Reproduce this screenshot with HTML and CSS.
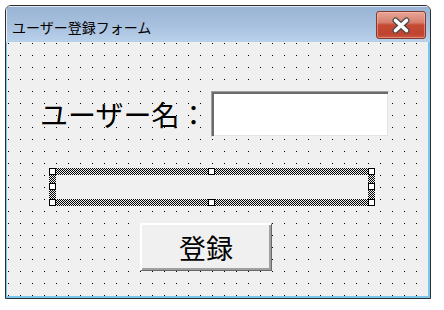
FILE: index.html
```html
<!DOCTYPE html>
<html lang="ja">
<head>
    <meta charset="UTF-8">
    <title>ユーザー登録フォーム</title>
    <link rel="stylesheet" href="styles.css">
</head>
<body>

    <div class="window">
        <div class="titlebar">
            <span class="title">ユーザー登録フォーム</span>
            <div class="close-btn">
                <svg width="18" height="17" viewBox="0 0 18 17">
                    <path d="M3.5 3.5 L14.5 13.5 M14.5 3.5 L3.5 13.5" stroke="#4a4a4a" stroke-width="6" stroke-linecap="round"/>
                    <path d="M3.5 3.5 L14.5 13.5 M14.5 3.5 L3.5 13.5" stroke="#ffffff" stroke-width="3.6" stroke-linecap="round"/>
                </svg>
            </div>
        </div>

        <div class="client">
            <div class="field-row">
                <span class="field-label">ユーザー名：</span>
                <div class="textbox"></div>
            </div>

            <div class="selection">
                <div class="label-control"></div>
                <span class="handle tl"></span>
                <span class="handle tm"></span>
                <span class="handle tr"></span>
                <span class="handle ml"></span>
                <span class="handle mr"></span>
                <span class="handle bl"></span>
                <span class="handle bm"></span>
                <span class="handle br"></span>
            </div>

            <div class="command-btn">登録</div>
        </div>
    </div>

</body>
</html>
```

FILE: styles.css
```css
body {
    margin: 0;
    background-color: #ffffff;
    font-family: "Noto Sans CJK JP", "Noto Sans", sans-serif;
    color: #000;
}

.window {
    box-sizing: border-box;
    margin: 5px 0 0 5px;
    width: 426px;
    height: 294px;
    border: 1px solid #2e2e2e;
    border-radius: 6px 6px 0 0;
    overflow: hidden;
    display: flex;
    flex-direction: column;
}

.titlebar {
    height: 36px;
    display: flex;
    justify-content: space-between;
    align-items: flex-start;
    background-image: linear-gradient(#98b3d3, #a9c2df 60%, #bad1ea);
    box-shadow: inset 1px 1px 0 rgba(255, 255, 255, 0.7);
}

.title {
    margin: 11px 0 0 6px;
    font-size: 14px;
    line-height: 20px;
    color: #000;
}

.close-btn {
    box-sizing: border-box;
    width: 50px;
    height: 28px;
    margin: 5px 4px 0 0;
    border: 1px solid #83392c;
    border-radius: 3px;
    background-image: linear-gradient(#e7a696, #d7806f 40%, #c54a35 50%, #c0432e 85%, #cc5a43);
    box-shadow: inset 0 0 0 1px rgba(255, 200, 190, 0.45);
    display: flex;
    align-items: center;
    justify-content: center;
}

.close-btn svg {
    margin-top: 1px;
}

.client {
    flex: 1;
    border-left: 1px solid #78c6ee;
    border-right: 2px solid #78c6ee;
    border-bottom: 2px solid #78c6ee;
    background-color: #f0f0f0;
    background-image:
        linear-gradient(90deg, #f0f0f0 11px, transparent 1px),
        linear-gradient(#f0f0f0 11px, #000 1px);
    background-size: 12px 12px;
    background-position: 2px 2px;
    display: flex;
    flex-direction: column;
    align-items: flex-start;
    padding-top: 49px;
}

.field-row {
    display: flex;
    align-items: center;
    padding-left: 33px;
}

.field-label {
    font-size: 28px;
    line-height: 1;
    white-space: nowrap;
}

.textbox {
    box-sizing: border-box;
    width: 178px;
    height: 46px;
    margin-left: 4px;
    background-color: #ffffff;
    border-top: 1px solid #a0a0a0;
    border-left: 1px solid #a0a0a0;
    border-right: 1px solid #f0f0f0;
    border-bottom: 1px solid #f0f0f0;
    box-shadow: inset 2px 2px 0 #6b6b6b, inset -1px -1px 0 #e3e3e3;
}

.selection {
    position: relative;
    box-sizing: border-box;
    width: 326px;
    height: 38px;
    margin: 31px 0 0 42px;
    padding: 7px;
    background: repeating-conic-gradient(#000 0 25%, #f0f0f0 0 50%) 0 0 / 2px 2px;
}

.label-control {
    width: 100%;
    height: 100%;
    background-color: #f0f0f0;
}

.handle {
    position: absolute;
    box-sizing: border-box;
    width: 7px;
    height: 7px;
    border: 1px solid #000;
    background-color: #fff;
}

.handle.tl { left: 0; top: 0; }
.handle.tm { left: 159px; top: 0; }
.handle.tr { right: 0; top: 0; }
.handle.ml { left: 0; top: 15px; }
.handle.mr { right: 0; top: 15px; }
.handle.bl { left: 0; bottom: 0; }
.handle.bm { left: 159px; bottom: 0; }
.handle.br { right: 0; bottom: 0; }

.command-btn {
    box-sizing: border-box;
    width: 132px;
    height: 48px;
    margin: 17px 0 0 133px;
    background-color: #f0f0f0;
    border-top: 1px solid #ffffff;
    border-left: 1px solid #ffffff;
    border-right: 1px solid #696969;
    border-bottom: 1px solid #696969;
    box-shadow: inset 1px 1px 0 #ffffff, inset -2px -2px 0 #a0a0a0;
    display: flex;
    align-items: center;
    justify-content: center;
    font-size: 27px;
    line-height: 1;
}
```
